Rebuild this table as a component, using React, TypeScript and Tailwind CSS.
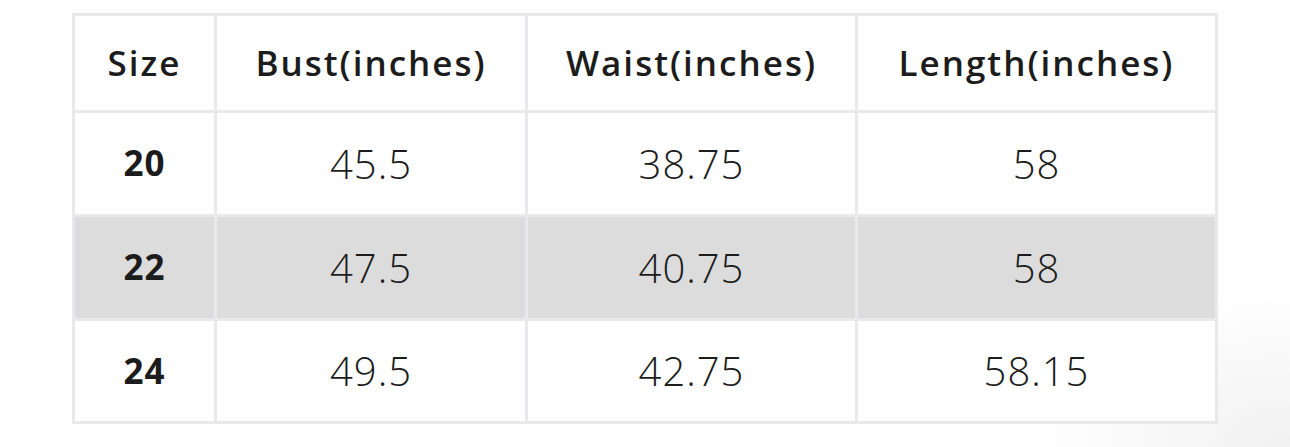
const headers = ['Size', 'Bust(inches)', 'Waist(inches)', 'Length(inches)']

const rows = [
  ['20', '45.5', '38.75', '58'],
  ['22', '47.5', '40.75', '58'],
  ['24', '49.5', '42.75', '58.15'],
]

const App = () => {
  return (
    <div className="w-[1290px] h-[447px] overflow-hidden bg-[radial-gradient(ellipse_260px_160px_at_100%_100%,#f1f1f1,#ffffff)] font-['Open_Sans',sans-serif] text-[#1c1c1c]">
      <div className="ml-[72px] mt-[13px] w-[1146px] grid grid-cols-[139px_308px_327px_357px] grid-rows-[94px_101px_101px_100px] gap-[3px] p-[3px] bg-[#e9e9eb]">
        {headers.map((h) => (
          <div
            key={h}
            className="bg-white flex items-center justify-center text-[35px] font-semibold tracking-[2px]"
          >
            {h}
          </div>
        ))}
        {rows.map((row, i) =>
          row.map((cell, j) => (
            <div
              key={`${i}-${j}`}
              className={`flex items-center justify-center ${
                i === 1 ? 'bg-[#dcdcdc]' : 'bg-white'
              } ${
                j === 0
                  ? 'text-[35px] font-bold tracking-[1px]'
                  : 'text-[40px] font-light tracking-[1px]'
              }`}
            >
              {cell}
            </div>
          ))
        )}
      </div>
    </div>
  )
}

export default App
